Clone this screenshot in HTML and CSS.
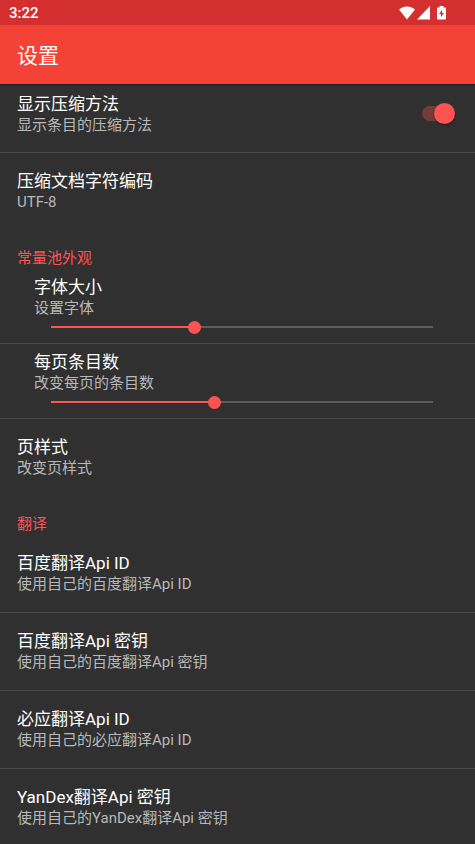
FILE: index.html
```html
<!DOCTYPE html>
<html lang="zh-CN">
<head>
<meta charset="UTF-8">
<meta name="viewport" content="width=device-width, initial-scale=1.0">
<title>设置</title>
<link rel="stylesheet" href="styles.css">
</head>
<body>
<div class="status-bar">
  <span class="clock">3:22</span>
  <div class="status-icons">
    <svg width="16" height="14" viewBox="0 0 16 14"><path d="M0 3.6C4.6-.6 11.400-.6 16 3.600L8 13.600z"/></svg>
    <svg width="13" height="14" viewBox="0 0 13 14"><path d="M13 0v13.600H0z"/></svg>
    <svg class="battery" width="9" height="14" viewBox="0 0 9 14"><path fill-rule="evenodd" d="M2.6 0h3.8v1.4H8.2q.8 0 .8.8v10.600q0 .8-.8.8H.8q-.8 0-.8-.8V2.2q0-.8.8-.8h1.8zM5 3.8L2 8h2v3.200L7 7H5z"/></svg>
  </div>
</div>
<header class="toolbar">
  <h1>设置</h1>
</header>
<main class="settings">
  <div class="item item-switch">
    <label class="text" for="showMethod">
      <span class="title">显示压缩方法</span>
      <span class="summary">显示条目的压缩方法</span>
    </label>
    <input class="switch" type="checkbox" id="showMethod" checked>
  </div>
  <button class="item last">
    <span class="title">压缩文档字符编码</span>
    <span class="summary">UTF-8</span>
  </button>

  <h2 class="category">常量池外观</h2>
  <div class="item item-seek">
    <label class="text" for="fontSize">
      <span class="title">字体大小</span>
      <span class="summary">设置字体</span>
    </label>
    <input class="seek" type="range" id="fontSize" min="0" max="100" value="37" style="--fill: 37%">
  </div>
  <div class="item item-seek">
    <label class="text" for="pageSize">
      <span class="title">每页条目数</span>
      <span class="summary">改变每页的条目数</span>
    </label>
    <input class="seek" type="range" id="pageSize" min="0" max="40" value="17" style="--fill: 42.5%">
  </div>
  <button class="item last">
    <span class="title">页样式</span>
    <span class="summary">改变页样式</span>
  </button>

  <h2 class="category">翻译</h2>
  <button class="item">
    <span class="title">百度翻译Api ID</span>
    <span class="summary">使用自己的百度翻译Api ID</span>
  </button>
  <button class="item">
    <span class="title">百度翻译Api 密钥</span>
    <span class="summary">使用自己的百度翻译Api 密钥</span>
  </button>
  <button class="item">
    <span class="title">必应翻译Api ID</span>
    <span class="summary">使用自己的必应翻译Api ID</span>
  </button>
  <button class="item last">
    <span class="title">YanDex翻译Api 密钥</span>
    <span class="summary">使用自己的YanDex翻译Api 密钥</span>
  </button>
</main>
<script>
  // 拖动时更新已填充的轨道
  document.querySelectorAll('.seek').forEach(function (seek) {
    seek.addEventListener('input', function () {
      seek.style.setProperty('--fill', seek.value / seek.max * 100 + '%');
    });
  });
</script>
</body>
</html>
```
FILE: styles.css
```css
* {
  box-sizing: border-box;
}
body {
  display: flex;
  flex-direction: column;
  height: 100vh;
  margin: 0;
  background: #303030;
  color: #fff;
  font-family: Roboto, "Noto Sans CJK SC", sans-serif;
}
.status-bar {
  display: flex;
  flex: none;
  align-items: center;
  justify-content: space-between;
  height: 25px;
  padding: 0 29px 0 9px;
  background: #d32f2f;
}
.clock {
  font-size: 15px;
  font-weight: 500;
  line-height: 20px;
}
.status-icons {
  display: flex;
  gap: 2px;
  fill: #fff;
}
.battery {
  margin: 0 0 0 5px;
}
.toolbar {
  flex: none;
  z-index: 1;
  padding: 17px 17px 13px;
  background: #f44336;
  box-shadow: 0 1px 1px rgba(0, 0, 0, 0.3);
}
.toolbar h1 {
  margin: 0;
  font-size: 21px;
  font-weight: 400;
  line-height: 29px;
}
.settings {
  flex: 1;
  min-height: 0;
  overflow: hidden;
}
.item {
  display: block;
  width: 100%;
  margin: 0;
  padding: 18px 17px 17px;
  background: none;
  border: 0;
  border-bottom: 1px solid #4a4a4a;
  color: inherit;
  font-family: inherit;
  text-align: left;
}
.item.last {
  border-bottom: 0;
}
.title,
.summary {
  display: block;
  line-height: 21px;
}
.title {
  font-size: 17px;
}
.summary {
  color: #b8b8b8;
  font-size: 15px;
}
.category {
  margin: 0;
  padding: 17px 17px 0;
  color: #ff5252;
  font-size: 15px;
  font-weight: 400;
  line-height: 22px;
}

/* 开关 */
.item-switch {
  display: flex;
  align-items: flex-start;
  justify-content: space-between;
  padding: 10px 20px 16px 17px;
}
.switch {
  appearance: none;
  display: flex;
  align-items: center;
  justify-content: flex-end;
  width: 33px;
  height: 21px;
  margin: 9px 0 0;
  border: solid transparent;
  border-width: 3px 0;
  border-radius: 8px / 11px;
  background: #743b3b;
  background-clip: padding-box;
}
.switch::before {
  content: "";
  flex: none;
  width: 21px;
  height: 21px;
  border-radius: 50%;
  background: #ff5252;
  box-shadow: 0 1px 2px rgba(0, 0, 0, 0.4);
}
.switch:not(:checked) {
  justify-content: flex-start;
}

/* 滑块 */
.item-seek {
  display: flex;
  flex-direction: column;
  padding: 8px 25px 8px 34px;
}
.seek {
  appearance: none;
  height: 16px;
  margin: 0 17px;
  background: none;
}
.seek::-webkit-slider-runnable-track {
  height: 2px;
  background: linear-gradient(#ff5252, #ff5252) left / var(--fill) 100% no-repeat #5c5c5c;
}
.seek::-webkit-slider-thumb {
  appearance: none;
  width: 13px;
  height: 13px;
  margin-top: -5px;
  border-radius: 50%;
  background: #ff5252;
}
```
